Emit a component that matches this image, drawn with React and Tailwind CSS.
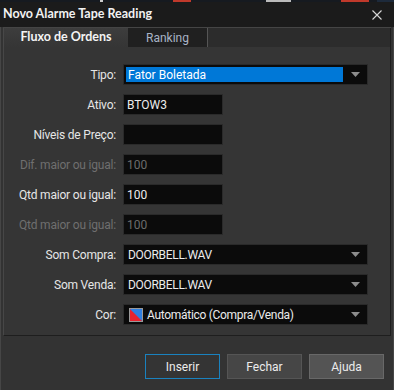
const font = { fontFamily: 'Roboto, Lato, sans-serif' };
const lato = { fontFamily: 'Lato, Roboto, sans-serif' };

function Arrow() {
  return (
    <svg width="9" height="5" viewBox="0 0 9 5" className="shrink-0">
      <path d="M0 0h9L4.5 5z" fill="#8c8c8c" />
    </svg>
  );
}

function Row({ label, disabled, children }) {
  return (
    <div className="flex items-center h-[21px]">
      <div
        className={`w-[113px] pr-[1px] text-right text-[12px] tracking-[-0.2px] ${
          disabled ? "text-[#6f6f6f]" : "text-[#e6e6e6]"
        }`}
      >
        {label}
      </div>
      <div className="ml-[6px] flex h-full">{children}</div>
    </div>
  );
}

function Input({ value, disabled }) {
  return (
    <div
      className={`w-[100px] h-[21px] bg-[#0b0b0b] border border-[#2a2a2a] px-[3px] flex items-center text-[12px] ${
        disabled ? "text-[#6c6c6c]" : "text-[#ececec]"
      }`}
    >
      {value}
    </div>
  );
}

function Select({ children, highlight }) {
  return (
    <div className="w-[245px] h-[21px] bg-[#0b0b0b] border border-[#2a2a2a] flex items-center pl-[2px] pr-[7px] text-[12px] text-[#ececec]">
      <div
        className={`flex-1 h-[15px] flex items-center pl-[2px] ${
          highlight ? "bg-[#0078d7] text-white" : "tracking-[-0.3px]"
        }`}
      >
        {children}
      </div>
      <div className="ml-[8px]">
        <Arrow />
      </div>
    </div>
  );
}

export default function App() {
  return (
    <div
      className="w-[394px] h-[390px] bg-[#333333] flex flex-col overflow-hidden"
      style={font}
    >
      {/* background app strip */}
      <div className="h-[2px] bg-[#161a20] flex shrink-0">
        <div className="ml-[100px] w-[3px] bg-[#cccccc]" />
        <div className="ml-[70px] w-[18px] bg-[#c0392b]" />
        <div className="ml-[75px] w-[25px] bg-[#bbbbbb]" />
        <div className="ml-[50px] w-[28px] bg-[#c0392b]" />
        <div className="ml-[8px] flex-1 bg-[#1d2a3b]" />
      </div>

      {/* title bar */}
      <div className="h-[25px] bg-[#1b1b1b] flex items-center justify-between pl-[3px] pr-[12px] shrink-0">
        <span className="text-[12.5px] font-bold text-[#f2f2f2]" style={lato}>
          Novo Alarme Tape Reading
        </span>
        <svg width="10" height="10" viewBox="0 0 10 10">
          <path d="M0.5 0.5l9 9M9.5 0.5l-9 9" stroke="#d8d8d8" strokeWidth="1.1" />
        </svg>
      </div>

      {/* body */}
      <div className="flex-1 flex flex-col border-x border-[#464646] px-[2px]">
        {/* tabs */}
        <div className="h-[20px] flex border-t border-[#454545] bg-[#2c2c2c] shrink-0">
          <div
            className="w-[125px] border-l border-[#484848] bg-gradient-to-b from-[#3d3d3d] to-[#353535] flex items-center justify-center text-[12.5px] font-bold text-[#f4f4f4]"
            style={lato}
          >
            Fluxo de Ordens
          </div>
          <div className="w-[80px] bg-[#202020] border-r border-[#555] flex items-center justify-center text-[12px] text-[#a9b4c6]">
            Ranking
          </div>
          <div className="flex-1 border-r border-[#1e1e1e]" />
        </div>

        {/* panel */}
        <div className="h-[289px] bg-[#353535] border border-t-0 border-l-[#474747] border-r-[#1e1e1e] border-b-[#1e1e1e] flex flex-col gap-[9px] pt-[17px] shrink-0">
          <Row label="Tipo:">
            <Select highlight>Fator Boletada</Select>
          </Row>
          <Row label="Ativo:">
            <Input value="BTOW3" />
          </Row>
          <Row label="Níveis de Preço:">
            <Input value="" />
          </Row>
          <Row label="Dif. maior ou igual:" disabled>
            <Input value="100" disabled />
          </Row>
          <Row label="Qtd maior ou igual:">
            <Input value="100" />
          </Row>
          <Row label="Qtd maior ou igual:" disabled>
            <Input value="100" disabled />
          </Row>
          <Row label="Som Compra:">
            <Select>DOORBELL.WAV</Select>
          </Row>
          <Row label="Som Venda:">
            <Select>DOORBELL.WAV</Select>
          </Row>
          <Row label="Cor:">
            <Select>
              <svg width="14" height="14" viewBox="0 0 14 14" className="mr-[4px] ml-[1px]">
                <rect x="0.5" y="0.5" width="13" height="13" fill="#2f7fe0" stroke="#9a9a9a" />
                <path d="M1 1L13 13H1z" fill="#e8232f" />
              </svg>
              Automático (Compra/Venda)
            </Select>
          </Row>
        </div>

        {/* buttons */}
        <div className="flex justify-end gap-[7px] pt-[18px] pr-[7px]">
          <button className="w-[75px] h-[25px] bg-[#343434] border border-[#1a82bf] text-[12px] text-[#ececec]">
            Inserir
          </button>
          <button className="w-[75px] h-[25px] bg-[#464646] border border-[#555555] text-[12px] text-[#ececec]">
            Fechar
          </button>
          <button className="w-[75px] h-[25px] bg-[#545454] border border-[#686868] text-[12px] text-[#ececec]">
            Ajuda
          </button>
        </div>
      </div>
    </div>
  );
}
